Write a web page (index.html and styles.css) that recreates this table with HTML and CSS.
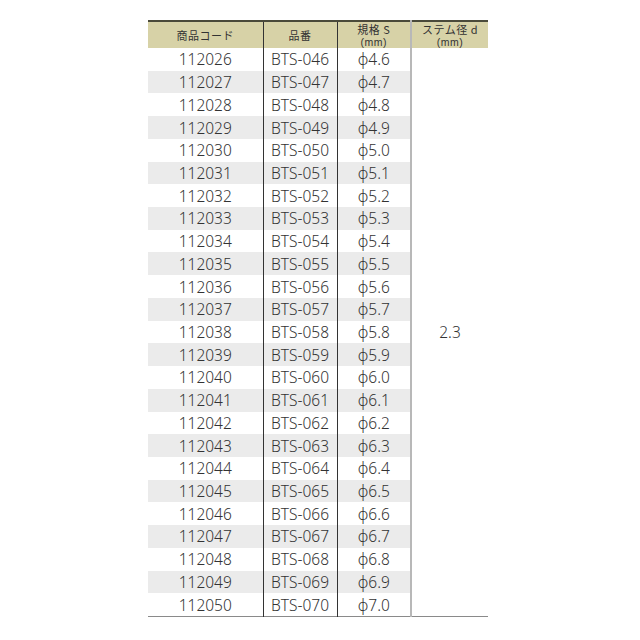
FILE: index.html
```html
<!DOCTYPE html>
<html lang="ja">
<head>
<meta charset="utf-8">
<link rel="stylesheet" href="styles.css">
</head>
<body>
<div class="page">
<table class="spec">
<colgroup><col class="c1"><col class="c2"><col class="c3"><col class="c4"></colgroup>
<thead>
<tr><th>商品コード</th><th>品番</th><th><span class="hl">規格 S</span><span class="hl unit">(mm)</span></th><th><span class="hl">ステム径 d</span><span class="hl unit">(mm)</span></th></tr>
</thead>
<tbody>
<tr><td>112026</td><td>BTS-046</td><td>ϕ4.6</td><td class="stem" rowspan="25">2.3</td></tr>
<tr class="alt"><td>112027</td><td>BTS-047</td><td>ϕ4.7</td></tr>
<tr><td>112028</td><td>BTS-048</td><td>ϕ4.8</td></tr>
<tr class="alt"><td>112029</td><td>BTS-049</td><td>ϕ4.9</td></tr>
<tr><td>112030</td><td>BTS-050</td><td>ϕ5.0</td></tr>
<tr class="alt"><td>112031</td><td>BTS-051</td><td>ϕ5.1</td></tr>
<tr><td>112032</td><td>BTS-052</td><td>ϕ5.2</td></tr>
<tr class="alt"><td>112033</td><td>BTS-053</td><td>ϕ5.3</td></tr>
<tr><td>112034</td><td>BTS-054</td><td>ϕ5.4</td></tr>
<tr class="alt"><td>112035</td><td>BTS-055</td><td>ϕ5.5</td></tr>
<tr><td>112036</td><td>BTS-056</td><td>ϕ5.6</td></tr>
<tr class="alt"><td>112037</td><td>BTS-057</td><td>ϕ5.7</td></tr>
<tr><td>112038</td><td>BTS-058</td><td>ϕ5.8</td></tr>
<tr class="alt"><td>112039</td><td>BTS-059</td><td>ϕ5.9</td></tr>
<tr><td>112040</td><td>BTS-060</td><td>ϕ6.0</td></tr>
<tr class="alt"><td>112041</td><td>BTS-061</td><td>ϕ6.1</td></tr>
<tr><td>112042</td><td>BTS-062</td><td>ϕ6.2</td></tr>
<tr class="alt"><td>112043</td><td>BTS-063</td><td>ϕ6.3</td></tr>
<tr><td>112044</td><td>BTS-064</td><td>ϕ6.4</td></tr>
<tr class="alt"><td>112045</td><td>BTS-065</td><td>ϕ6.5</td></tr>
<tr><td>112046</td><td>BTS-066</td><td>ϕ6.6</td></tr>
<tr class="alt"><td>112047</td><td>BTS-067</td><td>ϕ6.7</td></tr>
<tr><td>112048</td><td>BTS-068</td><td>ϕ6.8</td></tr>
<tr class="alt"><td>112049</td><td>BTS-069</td><td>ϕ6.9</td></tr>
<tr><td>112050</td><td>BTS-070</td><td>ϕ7.0</td></tr>
</tbody>
</table>
</div>
</body>
</html>
```

FILE: styles.css
```css
html, body {
  margin: 0;
  padding: 0;
  background: #ffffff;
}
.page {
  padding: 20px 0 0 148px;
}
.spec {
  border-collapse: collapse;
  table-layout: fixed;
  width: 340px;
  font-family: "Noto Sans", "Open Sans", "Noto Sans CJK JP", sans-serif;
  color: #333333;
  border-top: 2px solid #4a4a3a;
  border-bottom: 1px solid #8a8a8a;
}
.c1 { width: 115px; }
.c2 { width: 74px; }
.c3 { width: 74px; }
.c4 { width: 77px; }
.spec th {
  background: #d7d2a7;
  height: 26px;
  padding: 0;
  font-size: 11px;
  line-height: 13px;
  font-weight: 400;
  letter-spacing: 0.5px;
  color: #333;
  vertical-align: middle;
  font-family: "Noto Sans CJK JP", sans-serif;
}
.spec th .hl {
  display: block;
  line-height: 13px;
}
.spec th .unit {
  font-size: 10.5px;
  line-height: 12px;
  font-family: "Liberation Sans", sans-serif;
}
.spec td {
  height: 22.72px;
  padding: 0;
  text-align: center;
  font-size: 15.5px;
  line-height: 18px;
  font-weight: 300;
}
.spec tr.alt td {
  background: #ebebeb;
}
.spec th:nth-child(1), .spec td:nth-child(1) {
  border-right: 1px solid #333;
}
.spec th:nth-child(2), .spec td:nth-child(2) {
  border-right: 1px solid #333;
}
.spec th:nth-child(3), .spec td:nth-child(3) {
  border-right: 2px solid #b8b8b8;
}
.spec td.stem {
  background: #fff;
  vertical-align: middle;
}
```
